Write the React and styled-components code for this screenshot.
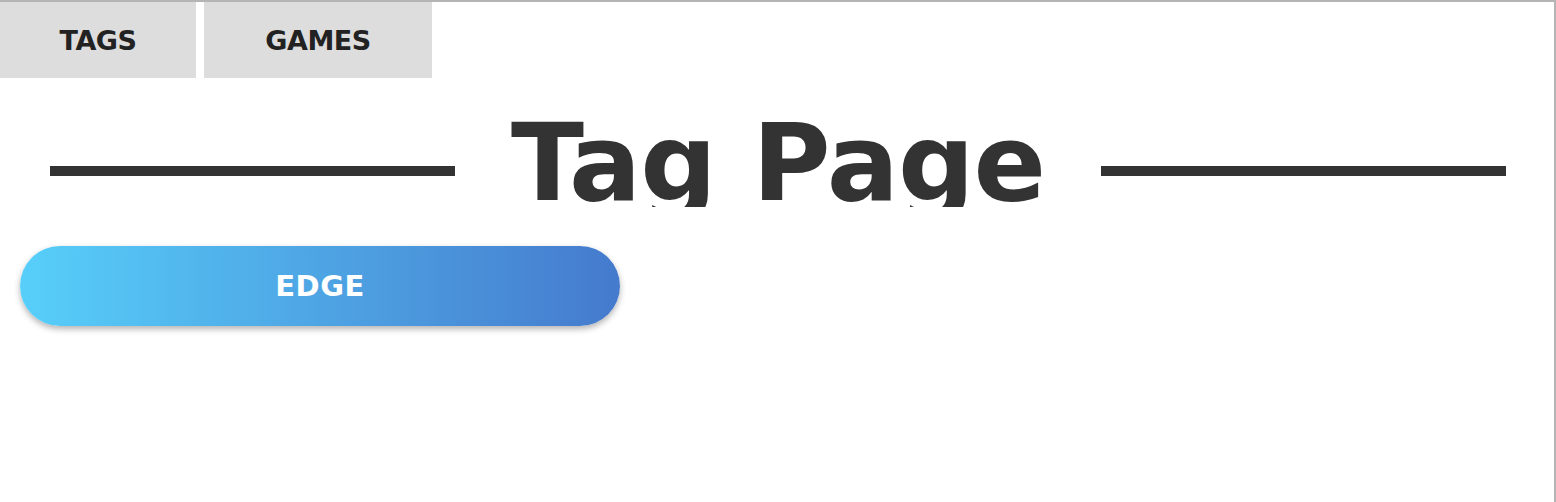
import React from "react";
import styled, { createGlobalStyle } from "styled-components";

const GlobalStyle = createGlobalStyle`
  html, body {
    margin: 0;
    padding: 0;
    background: #fff;
  }
  body {
    font-family: "DejaVu Sans", sans-serif;
  }
`;

const Frame = styled.div`
  box-sizing: border-box;
  width: 1556px;
  height: 502px;
  border-top: 2px solid #b4b4b4;
  border-right: 2px solid #b4b4b4;
  overflow: hidden;
`;

const TabBar = styled.nav`
  display: flex;
  gap: 8px;
`;

const Tab = styled.a`
  display: flex;
  align-items: center;
  justify-content: center;
  width: ${(p) => p.$width}px;
  height: 76px;
  background: #dddddd;
  color: #222;
  font-family: "DejaVu Sans", sans-serif;
  font-weight: 700;
  font-size: 27px;
  letter-spacing: -0.5px;
  text-transform: uppercase;
  text-decoration: none;
  cursor: pointer;
`;

const Header = styled.header`
  display: flex;
  align-items: flex-start;
  padding: 0 48px 0 50px;
  margin-top: 32px;
`;

const Rule = styled.div`
  flex: 1;
  height: 10px;
  margin-top: 56px;
  background: #333;
`;

const Title = styled.h1`
  margin: 0 56px;
  height: 97px;
  overflow: hidden;
  font-family: "DejaVu Sans", sans-serif;
  font-weight: 700;
  font-size: 107px;
  line-height: 107px;
  letter-spacing: -1px;
  color: #333;
  white-space: nowrap;
`;

const TagList = styled.div`
  display: flex;
  flex-wrap: wrap;
  gap: 20px;
  padding: 0 20px;
  margin-top: 39px;
`;

const TagButton = styled.button`
  width: 600px;
  height: 80px;
  border: none;
  border-radius: 40px;
  background: linear-gradient(to right, #57cffa, #457acd);
  box-shadow: 0 3px 6px rgba(0, 0, 0, 0.3);
  color: #fff;
  font-family: "DejaVu Sans", sans-serif;
  font-weight: 700;
  font-size: 29px;
  letter-spacing: 0.5px;
  text-transform: uppercase;
  cursor: pointer;
`;

const tags = ["edge"];

const App = () => {
  return (
    <>
      <GlobalStyle />
      <Frame>
        <TabBar>
          <Tab $width={196}>Tags</Tab>
          <Tab $width={228}>Games</Tab>
        </TabBar>
        <Header>
          <Rule />
          <Title>Tag Page</Title>
          <Rule />
        </Header>
        <TagList>
          {tags.map((t) => (
            <TagButton key={t}>{t}</TagButton>
          ))}
        </TagList>
      </Frame>
    </>
  );
};

export default App;
